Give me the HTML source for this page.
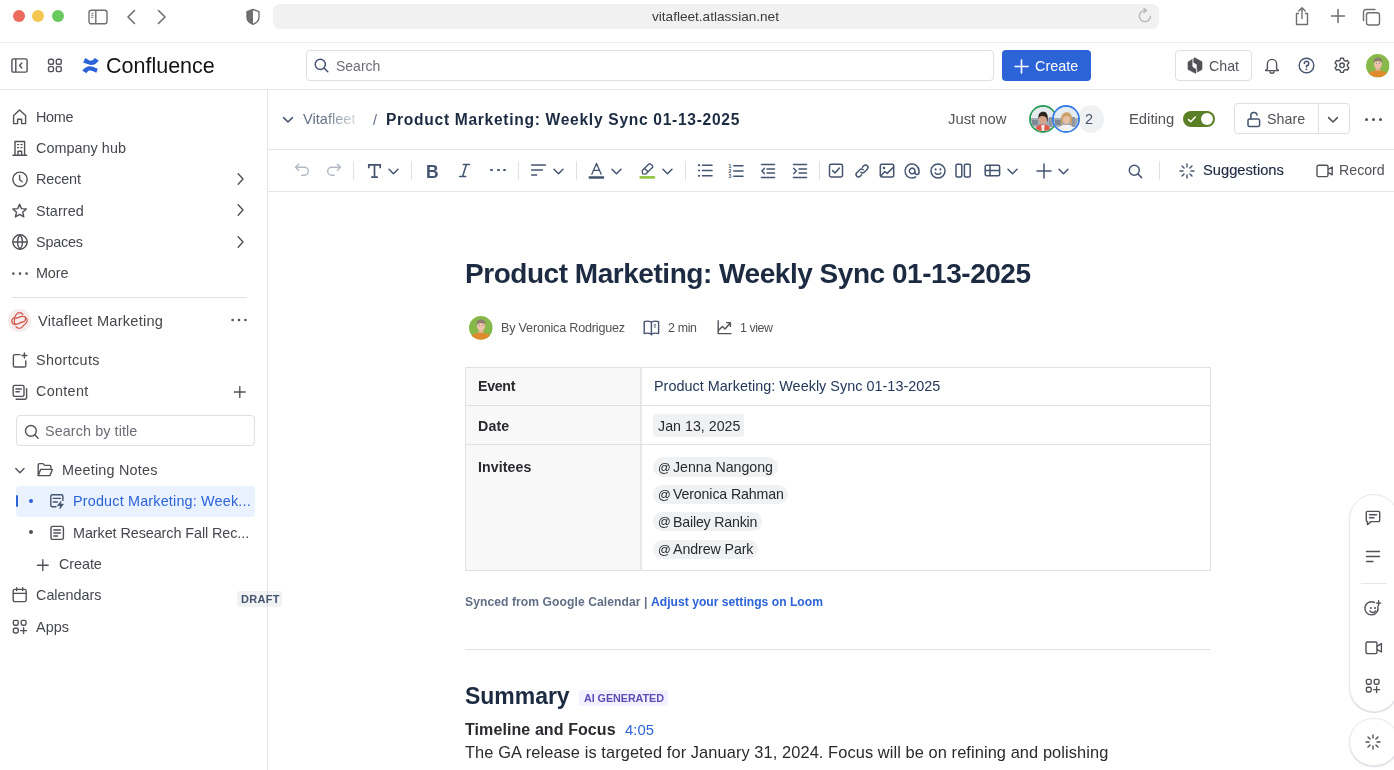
<!DOCTYPE html>
<html><head><meta charset="utf-8"><style>
html,body{margin:0;padding:0;width:1394px;height:770px;overflow:hidden;background:#fff;position:relative}
body{font-family:"Liberation Sans",sans-serif}
.t{position:absolute;white-space:nowrap;line-height:1;will-change:transform}
svg{overflow:visible}
</style></head><body>
<div style="position:absolute;left:0px;top:0px;width:1394px;height:42px;background:#fff"></div>
<div style="position:absolute;left:0px;top:42px;width:1394px;height:1px;background:#ececec"></div>
<div style="position:absolute;left:12.5px;top:9.5px;width:12px;height:12px;background:#ec6b5f;border-radius:50%"></div>
<div style="position:absolute;left:32px;top:9.5px;width:12px;height:12px;background:#f4c751;border-radius:50%"></div>
<div style="position:absolute;left:51.7px;top:9.5px;width:12px;height:12px;background:#68c95c;border-radius:50%"></div>
<svg style="position:absolute;left:88px;top:9px;" width="20" height="16" viewBox="0 0 20 16" fill="none"><rect x="1" y="1.2" width="18" height="13.6" rx="2.2" stroke="#6f6f6f" stroke-width="1.4"/><line x1="7.8" y1="1.5" x2="7.8" y2="14.5" stroke="#6f6f6f" stroke-width="1.4"/><path d="M3.2 4.3h2.4M3.2 6.3h2.4M3.2 8.3h2.4" stroke="#6f6f6f" stroke-width="0.9"/></svg>
<svg style="position:absolute;left:125px;top:9px;" width="12" height="16" viewBox="0 0 12 16" fill="none"><path d="M9.5 1.5 L3 8 L9.5 14.5" stroke="#6f6f6f" stroke-width="1.6" stroke-linecap="round" stroke-linejoin="round"/></svg>
<svg style="position:absolute;left:156px;top:9px;" width="12" height="16" viewBox="0 0 12 16" fill="none"><path d="M2.5 1.5 L9 8 L2.5 14.5" stroke="#6f6f6f" stroke-width="1.6" stroke-linecap="round" stroke-linejoin="round"/></svg>
<svg style="position:absolute;left:245px;top:8px;" width="16" height="18" viewBox="0 0 16 18" fill="none"><path d="M8 1.5 L14 3.6 V9.2 C14 12.6 11.2 15 8 16.3 C4.8 15 2 12.6 2 9.2 V3.6 Z" stroke="#6f6f6f" stroke-width="1.4" stroke-linejoin="round"/><path d="M8 1.5 L2 3.6 V9.2 C2 12.6 4.8 15 8 16.3 Z" fill="#6f6f6f"/></svg>
<div style="position:absolute;left:273px;top:4px;width:886px;height:25px;background:#f1f1f1;border-radius:7px"></div>
<div class="t" style="left:651.5px;top:10.00px;font-size:13.6px;color:#3b3b3b;font-weight:400;">vitafleet.atlassian.net</div>
<svg style="position:absolute;left:1136px;top:7px;" width="18" height="18" viewBox="0 0 18 18" fill="none"><path d="M14.5 9.5 A5.6 5.6 0 1 1 9 3.4" stroke="#b4b4b4" stroke-width="1.3" stroke-linecap="round"/><path d="M7.8 1.2 L10.6 3.4 L7.8 5.6" stroke="#b4b4b4" stroke-width="1.3" stroke-linecap="round" stroke-linejoin="round"/></svg>
<svg style="position:absolute;left:1294px;top:6px;" width="16" height="20" viewBox="0 0 16 20" fill="none"><path d="M5 7.5 H2.5 V18.5 H13.5 V7.5 H11" stroke="#6f6f6f" stroke-width="1.4" stroke-linejoin="round"/><path d="M8 12.5 V2 M4.8 5 L8 1.8 L11.2 5" stroke="#6f6f6f" stroke-width="1.4" stroke-linecap="round" stroke-linejoin="round"/></svg>
<svg style="position:absolute;left:1330px;top:8px;" width="16" height="16" viewBox="0 0 16 16" fill="none"><path d="M8 1.5 V14.5 M1.5 8 H14.5" stroke="#6f6f6f" stroke-width="1.5" stroke-linecap="round"/></svg>
<svg style="position:absolute;left:1362px;top:8px;" width="19" height="18" viewBox="0 0 19 18" fill="none"><rect x="4.5" y="4.7" width="13" height="12.3" rx="2.2" stroke="#6f6f6f" stroke-width="1.4"/><path d="M1.5 12.5 V4 A2.5 2.5 0 0 1 4 1.5 H13" stroke="#6f6f6f" stroke-width="1.4" stroke-linecap="round"/></svg>
<div style="position:absolute;left:0px;top:89px;width:1394px;height:1px;background:#e5e7eb"></div>
<svg style="position:absolute;left:11px;top:58px;" width="17" height="15" viewBox="0 0 17 15" fill="none"><rect x="0.9" y="0.9" width="15.2" height="13.2" rx="1.6" stroke="#505258" stroke-width="1.4"/><line x1="4.8" y1="1" x2="4.8" y2="14" stroke="#505258" stroke-width="1.4"/><path d="M10.8 5 L8.6 7.5 L10.8 10" stroke="#505258" stroke-width="1.4" stroke-linecap="round" stroke-linejoin="round"/></svg>
<svg style="position:absolute;left:47px;top:58px;" width="16" height="15" viewBox="0 0 16 15" fill="none"><rect x="1.5" y="1.2" width="5" height="5" rx="1.5" stroke="#505258" stroke-width="1.4"/><rect x="9.3" y="1.2" width="5" height="5" rx="1.5" stroke="#505258" stroke-width="1.4"/><rect x="1.5" y="8.6" width="5" height="5" rx="1.5" stroke="#505258" stroke-width="1.4"/><rect x="9.3" y="8.6" width="5" height="5" rx="1.5" stroke="#505258" stroke-width="1.4"/></svg>
<svg style="position:absolute;left:78px;top:52px;" width="28" height="26" viewBox="0 0 28 26" fill="none"><path d="M7.3 5.9 C9.5 7 11.5 9.2 13.5 8.6 C15 8.2 16 7 16.8 6 L20.8 8.4 C19 11 16.5 13 13 12.9 C10.5 12.8 8 11.5 5.1 10.5 Z" fill="#2c64d8"/><path d="M4.2 18.5 C6.5 16 9 14.2 11.8 14.2 C14.5 14.2 17 15.6 19.8 16.8 L18.3 20.8 C16 19.5 13.8 18.3 11.8 18.4 C10.3 18.5 9.2 19.8 8.3 21.2 Z" fill="#2c64d8"/></svg>
<div class="t" style="left:105.5px;top:56.00px;font-size:21.5px;color:#101214;font-weight:400;">Confluence</div>
<div style="position:absolute;left:306px;top:50px;width:688px;height:31px;border:1px solid #dcdfe4;border-radius:4px;box-sizing:border-box;background:#fff"></div>
<svg style="position:absolute;left:314px;top:58px;" width="15" height="15" viewBox="0 0 15 15" fill="none"><circle cx="6.3" cy="6.3" r="5.1" stroke="#44546f" stroke-width="1.5"/><path d="M10 10 L13.8 13.8" stroke="#44546f" stroke-width="1.5" stroke-linecap="round"/></svg>
<div class="t" style="left:335.5px;top:59.00px;font-size:14px;color:#6b6e76;font-weight:400;">Search</div>
<div style="position:absolute;left:1001.7px;top:50px;width:89px;height:30.7px;background:#2c64d8;border-radius:4px"></div>
<svg style="position:absolute;left:1013.5px;top:58.7px;" width="15" height="15" viewBox="0 0 15 15" fill="none"><path d="M7.5 1 V14 M1 7.5 H14" stroke="#fff" stroke-width="1.6" stroke-linecap="round"/></svg>
<div class="t" style="left:1035px;top:59.00px;font-size:14.4px;color:#fff;font-weight:400;">Create</div>
<div style="position:absolute;left:1175.2px;top:50px;width:76.4px;height:30.7px;border:1px solid #dddee1;border-radius:4px;box-sizing:border-box"></div>
<svg style="position:absolute;left:1183px;top:53px;" width="24" height="24" viewBox="0 0 24 24" fill="none"><path d="M11.8 4.8 L19 8.7 V16.4 L12.3 20.2 L5 16.4 V9 Z" fill="#505258" stroke="#505258" stroke-width="0.6" stroke-linejoin="round"/><path d="M9.9 5 V13.6 L13.7 16 V21" stroke="#fff" stroke-width="0.9"/><path d="M9.9 9.3 L13.7 11.5 V16 L9.9 13.6 Z" fill="#fff"/></svg>
<div class="t" style="left:1209px;top:59.00px;font-size:14.2px;color:#505258;font-weight:400;">Chat</div>
<svg style="position:absolute;left:1263.5px;top:57px;" width="16" height="17" viewBox="0 0 16 17" fill="none"><path d="M3.4 11.8 V7 A4.6 4.6 0 0 1 12.6 7 V11.8 L14.4 13.6 H1.6 Z" stroke="#505258" stroke-width="1.4" stroke-linejoin="round"/><path d="M6 14.2 A2 2 0 0 0 10 14.2" stroke="#505258" stroke-width="1.4"/></svg>
<svg style="position:absolute;left:1298px;top:57px;" width="17" height="17" viewBox="0 0 17 17" fill="none"><circle cx="8.5" cy="8.5" r="7.3" stroke="#44546f" stroke-width="1.4"/><path d="M6.3 6.5 A2.2 2.2 0 1 1 8.5 8.7 V10" stroke="#44546f" stroke-width="1.5" stroke-linecap="round"/><circle cx="8.5" cy="12.3" r="0.9" fill="#44546f"/></svg>
<svg style="position:absolute;left:1334px;top:57px;" width="16" height="17" viewBox="0 0 16 17" fill="none"><path d="M6.6 1.2 H9.4 L9.9 3.2 L11.5 4.1 L13.5 3.5 L14.9 5.9 L13.4 7.4 V9.2 L14.9 10.7 L13.5 13.1 L11.5 12.5 L9.9 13.4 L9.4 15.4 H6.6 L6.1 13.4 L4.5 12.5 L2.5 13.1 L1.1 10.7 L2.6 9.2 V7.4 L1.1 5.9 L2.5 3.5 L4.5 4.1 L6.1 3.2 Z" stroke="#505258" stroke-width="1.4" stroke-linejoin="round"/><circle cx="8" cy="8.3" r="2.3" stroke="#505258" stroke-width="1.4"/></svg>
<svg style="position:absolute;left:1365.7px;top:53.8px;" width="23.5" height="23.5" viewBox="0 0 24 24" fill="none"><defs><clipPath id="c1365"><circle cx="12" cy="12" r="12"/></clipPath></defs><g clip-path="url(#c1365)"><rect width="24" height="24" fill="#86b84a"/><rect x="9.8" y="12.5" width="4.6" height="6" fill="#e2b393"/><path d="M0.5 24 C1.5 19.5 5 17.6 9 17.2 L15.4 17.2 C19 17.6 22.5 19.5 23.5 24 Z" fill="#e08b2b"/><ellipse cx="12.2" cy="9.8" rx="4.2" ry="5.1" fill="#ecc3a6"/><path d="M7.9 9.6 C7.2 4.6 9.8 3.6 12.2 3.6 C15 3.6 17 5 16.5 9.6 C15.8 6.6 9.2 6.2 7.9 9.6 Z" fill="#8f7d70"/><circle cx="10.6" cy="9.6" r="0.65" fill="#8098ae"/><circle cx="13.9" cy="9.6" r="0.65" fill="#8098ae"/></g></svg>
<div style="position:absolute;left:267px;top:90px;width:1px;height:680px;background:#e4e6ea"></div>
<svg style="position:absolute;left:12px;top:108.5px;" width="16" height="16" viewBox="0 0 16 16" fill="none"><path d="M1.6 14.6 V6.6 L7.6 1 L13.6 6.6 V14.6 H9.6 V10.2 H5.6 V14.6 Z" stroke="#505258" stroke-width="1.4" stroke-linecap="round" stroke-linejoin="round"/></svg>
<div class="t" style="left:36.1px;top:110.00px;font-size:14.4px;color:#44474d;font-weight:400;letter-spacing:-0.303px;">Home</div>
<svg style="position:absolute;left:12px;top:139.5px;" width="16" height="16" viewBox="0 0 16 16" fill="none"><path d="M3 15.2 V1.5 H12.6 V15.2 M1 15.3 H14.6" stroke="#505258" stroke-width="1.4" stroke-linecap="round" stroke-linejoin="round"/><path d="M6 15.2 V11.2 H9.6 V15.2" stroke="#505258" stroke-width="1.4" stroke-linecap="round" stroke-linejoin="round"/><path d="M5.6 4.6h1M9 4.6h1M5.6 7.6h1M9 7.6h1" stroke="#505258" stroke-width="1.4" stroke-linecap="round" stroke-linejoin="round" stroke-width="1.5"/></svg>
<div class="t" style="left:36.1px;top:141.00px;font-size:14.4px;color:#44474d;font-weight:400;letter-spacing:0.035px;">Company hub</div>
<svg style="position:absolute;left:11.5px;top:171px;" width="16" height="16" viewBox="0 0 16 16" fill="none"><circle cx="8" cy="8.3" r="7.2" stroke="#505258" stroke-width="1.4" stroke-linecap="round" stroke-linejoin="round"/><path d="M7.6 4.4 V8.8 L10.2 10.8" stroke="#505258" stroke-width="1.4" stroke-linecap="round" stroke-linejoin="round"/></svg>
<div class="t" style="left:36.2px;top:172.00px;font-size:14.4px;color:#44474d;font-weight:400;letter-spacing:-0.125px;">Recent</div>
<svg style="position:absolute;left:12px;top:202.5px;" width="16" height="16" viewBox="0 0 16 16" fill="none"><path d="M7.6 1.2 L9.5 5.6 L14.3 6 L10.7 9.2 L11.8 13.9 L7.6 11.4 L3.4 13.9 L4.5 9.2 L0.9 6 L5.7 5.6 Z" stroke="#505258" stroke-width="1.4" stroke-linecap="round" stroke-linejoin="round"/></svg>
<div class="t" style="left:36.2px;top:204.00px;font-size:14.4px;color:#44474d;font-weight:400;letter-spacing:0.114px;">Starred</div>
<svg style="position:absolute;left:11.5px;top:234px;" width="16" height="16" viewBox="0 0 16 16" fill="none"><circle cx="8" cy="8" r="7.2" stroke="#505258" stroke-width="1.4" stroke-linecap="round" stroke-linejoin="round"/><path d="M0.9 8 H15.1" stroke="#505258" stroke-width="1.4" stroke-linecap="round" stroke-linejoin="round"/><path d="M8 0.8 C4.6 4.8 4.6 11.2 8 15.2 C11.4 11.2 11.4 4.8 8 0.8" stroke="#505258" stroke-width="1.4" stroke-linecap="round" stroke-linejoin="round"/></svg>
<div class="t" style="left:36.2px;top:235.00px;font-size:14.4px;color:#44474d;font-weight:400;letter-spacing:-0.206px;">Spaces</div>
<svg style="position:absolute;left:11.5px;top:266px;" width="16" height="16" viewBox="0 0 16 16" fill="none"><circle cx="1.4" cy="7.6" r="1.3" fill="#505258"/><circle cx="8" cy="7.6" r="1.3" fill="#505258"/><circle cx="14.6" cy="7.6" r="1.3" fill="#505258"/></svg>
<div class="t" style="left:36.2px;top:266.00px;font-size:14.4px;color:#44474d;font-weight:400;letter-spacing:-0.135px;">More</div>
<svg style="position:absolute;left:234px;top:171px;" width="16" height="16" viewBox="0 0 16 16" fill="none"><path d="M4.2 2.8 L9 8 L4.2 13.2" stroke="#505258" stroke-width="1.4" stroke-linecap="round" stroke-linejoin="round"/></svg>
<svg style="position:absolute;left:234px;top:202.3px;" width="16" height="16" viewBox="0 0 16 16" fill="none"><path d="M4.2 2.8 L9 8 L4.2 13.2" stroke="#505258" stroke-width="1.4" stroke-linecap="round" stroke-linejoin="round"/></svg>
<svg style="position:absolute;left:234px;top:233.6px;" width="16" height="16" viewBox="0 0 16 16" fill="none"><path d="M4.2 2.8 L9 8 L4.2 13.2" stroke="#505258" stroke-width="1.4" stroke-linecap="round" stroke-linejoin="round"/></svg>
<div style="position:absolute;left:11.5px;top:296.5px;width:235.5px;height:1px;background:#dfe1e6"></div>
<div style="position:absolute;left:8.2px;top:309.4px;width:22.4px;height:22.4px;background:#f5eceb;border-radius:50%"></div>
<svg style="position:absolute;left:4px;top:304px;" width="32" height="32" viewBox="0 0 32 32" fill="none"><path d="M10.8 14.1 C12 14.1 13.2 14 14.5 13.6 C15.6 13.2 16.4 12.5 17.6 12.4 C18.8 12.3 20 12.3 20.8 12.6 C21.6 13.2 21.8 14.2 21.5 15.3 C21.3 16.3 21 17.3 20 17.6 C19 17.9 18.2 18 17.3 18.4 C16.3 18.9 15.4 19.4 14.3 19.7 C13.3 20 12.2 20.3 11.3 20.2 C10.5 19.5 10.3 18.4 10.3 17.3 C10.3 16.2 10.4 15 10.8 14.1 Z" stroke="#d4534b" stroke-width="1.2"/><path d="M18.8 10.4 C17.8 9 16.6 8.5 15.4 8.6 C13.8 8.7 12.6 9.8 12 10.8 C11.5 11.8 11.2 12.8 10.4 13.6 C9.4 14.2 8.2 14.8 7.9 16.2 C7.6 17.8 8.2 19.3 9.5 20 C10.4 20.5 11.2 20.6 12 20.7" stroke="#d4534b" stroke-width="1.2" stroke-linecap="round"/><path d="M21.4 13.6 C22.6 14.4 23.4 15.6 23.2 17 C23 18.6 21.8 19.6 20.6 20.4 C19.6 21 19.2 22 18.4 22.9 C17.4 23.9 15.8 24.4 14.4 24.2 C13.4 24 12.6 23.6 12 22.9" stroke="#d4534b" stroke-width="1.2" stroke-linecap="round"/></svg>
<div class="t" style="left:38px;top:314.00px;font-size:14.6px;color:#44474d;font-weight:400;letter-spacing:0.242px;">Vitafleet Marketing</div>
<svg style="position:absolute;left:231px;top:312px;" width="16" height="16" viewBox="0 0 16 16" fill="none"><circle cx="1.6" cy="8" r="1.3" fill="#505258"/><circle cx="8" cy="8" r="1.3" fill="#505258"/><circle cx="14.4" cy="8" r="1.3" fill="#505258"/></svg>
<svg style="position:absolute;left:12px;top:351.5px;" width="16" height="16" viewBox="0 0 16 16" fill="none"><path d="M8 2.6 H3 A1.6 1.6 0 0 0 1.4 4.2 V13.4 A1.6 1.6 0 0 0 3 15 H12.2 A1.6 1.6 0 0 0 13.8 13.4 V9" stroke="#505258" stroke-width="1.4" stroke-linecap="round" stroke-linejoin="round"/><path d="M12.4 1 V6 M9.9 3.5 H14.9" stroke="#505258" stroke-width="1.4" stroke-linecap="round" stroke-linejoin="round"/></svg>
<div class="t" style="left:35.8px;top:353.00px;font-size:14.4px;color:#44474d;font-weight:400;letter-spacing:0.334px;">Shortcuts</div>
<svg style="position:absolute;left:12px;top:383.5px;" width="16" height="16" viewBox="0 0 16 16" fill="none"><rect x="1.2" y="1.4" width="10.8" height="11" rx="1.6" stroke="#505258" stroke-width="1.4" stroke-linecap="round" stroke-linejoin="round"/><path d="M3.9 5 H9.3 M3.9 7.8 H7.4" stroke="#505258" stroke-width="1.4" stroke-linecap="round" stroke-linejoin="round"/><path d="M14.6 4.6 V13.6 A1.6 1.6 0 0 1 13 15.2 H4.2" stroke="#505258" stroke-width="1.4" stroke-linecap="round" stroke-linejoin="round"/></svg>
<div class="t" style="left:35.8px;top:384.00px;font-size:14.4px;color:#44474d;font-weight:400;letter-spacing:0.295px;">Content</div>
<svg style="position:absolute;left:231.5px;top:383.5px;" width="16" height="16" viewBox="0 0 16 16" fill="none"><path d="M7.8 2.6 V13.4 M2.4 8 H13.2" stroke="#505258" stroke-width="1.4" stroke-linecap="round" stroke-linejoin="round"/></svg>
<div style="position:absolute;left:16px;top:415px;width:239px;height:31px;border:1px solid #dcdfe4;border-radius:4px;box-sizing:border-box"></div>
<svg style="position:absolute;left:23.5px;top:423.5px;" width="16" height="16" viewBox="0 0 16 16" fill="none"><circle cx="6.9" cy="6.9" r="5.4" stroke="#505258" stroke-width="1.4" stroke-linecap="round" stroke-linejoin="round" stroke-width="1.5"/><path d="M10.8 10.8 L14.2 14.2" stroke="#505258" stroke-width="1.4" stroke-linecap="round" stroke-linejoin="round" stroke-width="1.5"/></svg>
<div class="t" style="left:45.3px;top:424.00px;font-size:14.4px;color:#6b6e76;font-weight:400;letter-spacing:0.076px;">Search by title</div>
<svg style="position:absolute;left:11.5px;top:462.5px;" width="16" height="16" viewBox="0 0 16 16" fill="none"><path d="M3.8 5.6 L7.9 9.7 L12 5.6" stroke="#505258" stroke-width="1.4" stroke-linecap="round" stroke-linejoin="round"/></svg>
<svg style="position:absolute;left:37px;top:461.5px;" width="17" height="16" viewBox="0 0 17 16" fill="none"><path d="M1.2 13.6 V3 A1.4 1.4 0 0 1 2.6 1.6 H6 L7.6 3.4 H12.6 A1.3 1.3 0 0 1 13.9 4.7 V6.2" stroke="#505258" stroke-width="1.4" stroke-linecap="round" stroke-linejoin="round"/><path d="M1.3 13.6 L3.6 7.4 H15.3 L13 13.6 Z" stroke="#505258" stroke-width="1.4" stroke-linecap="round" stroke-linejoin="round"/></svg>
<div class="t" style="left:61.5px;top:463.00px;font-size:14.4px;color:#44474d;font-weight:400;letter-spacing:0.222px;">Meeting Notes</div>
<div style="position:absolute;left:16px;top:485.5px;width:239px;height:31px;background:#e9f2fe;border-radius:4px"></div>
<div style="position:absolute;left:16px;top:495px;width:2.2px;height:11.8px;background:#2c64d8;border-radius:1px"></div>
<div style="position:absolute;left:29.3px;top:499.2px;width:3.8px;height:3.8px;background:#2c64d8;border-radius:50%"></div>
<svg style="position:absolute;left:46px;top:490px;" width="22" height="22" viewBox="0 0 22 22" fill="none"><path d="M10 16.7 H6.3 A1.5 1.5 0 0 1 4.8 15.2 V6.3 A1.5 1.5 0 0 1 6.3 4.8 H15.4 A1.5 1.5 0 0 1 16.9 6.3 V10.4" stroke="#44546f" stroke-width="1.4" stroke-linecap="round" stroke-linejoin="round"/><path d="M7.3 8.4 H14.4 M7.3 12 H11.3" stroke="#44546f" stroke-width="1.4" stroke-linecap="round"/><path d="M15.1 10.9 L11.2 15.7 H14.2 L13.9 19.1 L17.6 14.1 H14.7 Z" fill="#44546f" stroke="#44546f" stroke-width="0.5" stroke-linejoin="round"/></svg>
<div class="t" style="left:72.8px;top:494.00px;font-size:14.4px;color:#2c64d8;font-weight:400;letter-spacing:0.176px;">Product Marketing: Week...</div>
<div style="position:absolute;left:29.3px;top:530.4px;width:3.8px;height:3.8px;background:#505258;border-radius:50%"></div>
<svg style="position:absolute;left:50px;top:524.8px;" width="16" height="16" viewBox="0 0 16 16" fill="none"><rect x="1" y="1.4" width="12.4" height="13" rx="1.6" stroke="#505258" stroke-width="1.4" stroke-linecap="round" stroke-linejoin="round"/><path d="M3.8 5 H10.4 M3.8 8 H10.4 M3.8 11 H7.6" stroke="#505258" stroke-width="1.4" stroke-linecap="round" stroke-linejoin="round"/></svg>
<div class="t" style="left:73.2px;top:526.00px;font-size:14.4px;color:#44474d;font-weight:400;letter-spacing:-0.082px;">Market Research Fall Rec...</div>
<svg style="position:absolute;left:35px;top:556.5px;" width="16" height="16" viewBox="0 0 16 16" fill="none"><path d="M7.8 2.8 V13.6 M2.4 8.2 H13.2" stroke="#505258" stroke-width="1.4" stroke-linecap="round" stroke-linejoin="round"/></svg>
<div class="t" style="left:59.4px;top:557.00px;font-size:14.4px;color:#44474d;font-weight:400;letter-spacing:-0.064px;">Create</div>
<svg style="position:absolute;left:12px;top:587px;" width="16" height="16" viewBox="0 0 16 16" fill="none"><rect x="1.2" y="2.4" width="13" height="12.2" rx="1.6" stroke="#505258" stroke-width="1.4" stroke-linecap="round" stroke-linejoin="round"/><path d="M1.4 6.4 H14 M4.7 0.8 V3.6 M10.7 0.8 V3.6" stroke="#505258" stroke-width="1.4" stroke-linecap="round" stroke-linejoin="round"/></svg>
<div class="t" style="left:35.8px;top:588.00px;font-size:14.4px;color:#44474d;font-weight:400;letter-spacing:-0.017px;">Calendars</div>
<div style="position:absolute;left:237px;top:591.3px;width:44.8px;height:15.6px;background:rgba(9,30,66,0.06);border-radius:3px"></div>
<div class="t" style="left:241.3px;top:594.00px;font-size:11px;color:#44546f;font-weight:700;letter-spacing:0.3px">DRAFT</div>
<svg style="position:absolute;left:12px;top:618.5px;" width="16" height="16" viewBox="0 0 16 16" fill="none"><rect x="1.4" y="1.4" width="4.8" height="4.8" rx="1.4" stroke="#505258" stroke-width="1.4" stroke-linecap="round" stroke-linejoin="round"/><rect x="9.2" y="1.4" width="4.8" height="4.8" rx="1.4" stroke="#505258" stroke-width="1.4" stroke-linecap="round" stroke-linejoin="round"/><rect x="1.4" y="9.2" width="4.8" height="4.8" rx="1.4" stroke="#505258" stroke-width="1.4" stroke-linecap="round" stroke-linejoin="round"/><path d="M11.6 8.6 V14.6 M8.6 11.6 H14.6" stroke="#505258" stroke-width="1.4" stroke-linecap="round" stroke-linejoin="round"/></svg>
<div class="t" style="left:35.8px;top:620.00px;font-size:14.4px;color:#44474d;font-weight:400;letter-spacing:0.060px;">Apps</div>
<div style="position:absolute;left:268px;top:149px;width:1126px;height:1px;background:#e4e6ea"></div>
<div style="position:absolute;left:268px;top:191px;width:1126px;height:1px;background:#e4e6ea"></div>
<svg style="position:absolute;left:282px;top:114px;" width="12" height="12" viewBox="0 0 12 12" fill="none"><path d="M1.6 3.6 L6 8 L10.4 3.6" stroke="#44546f" stroke-width="1.5" stroke-linecap="round" stroke-linejoin="round"/></svg>
<div class="t" style="left:303px;top:112.00px;font-size:14.6px;color:#626f86;font-weight:400;-webkit-mask-image:linear-gradient(90deg,#000 40%,rgba(0,0,0,0.25) 100%);mask-image:linear-gradient(90deg,#000 40%,rgba(0,0,0,0.25) 100%)">Vitafleet</div>
<div class="t" style="left:372.5px;top:113.00px;font-size:14.5px;color:#626f86;font-weight:400;">/</div>
<div class="t" style="left:386px;top:112.00px;font-size:15.6px;color:#1c2b42;font-weight:700;letter-spacing:0.695px;">Product Marketing: Weekly Sync 01-13-2025</div>
<div class="t" style="left:948px;top:112.00px;font-size:14.8px;color:#505258;font-weight:400;">Just now</div>
<svg style="position:absolute;left:1028.5px;top:104.6px;" width="28" height="28" viewBox="0 0 28 28" fill="none"><defs><clipPath id="av1"><circle cx="14" cy="14" r="12"/></clipPath></defs><circle cx="14" cy="14" r="13" fill="#fff" stroke="#2e9d5c" stroke-width="1.9"/><g clip-path="url(#av1)"><rect width="28" height="28" fill="#e6ebf0"/><rect y="13" width="28" height="9" fill="#a3acb5"/><rect x="3" y="15" width="6" height="5" fill="#7d8893"/><rect x="20" y="12" width="3" height="10" fill="#8e99a4"/><path d="M13 28 L5 28 C6 22 9 20 12 19.5 L16 19.5 C19 20 21.5 22 22.5 28 Z" fill="#e2574b"/><path d="M12.3 20 L15.7 20 L15 28 L13 28 Z" fill="#efe9e6"/><ellipse cx="13.8" cy="14.3" rx="3.9" ry="4.9" fill="#d6a48a"/><path d="M9.6 14 C8.5 8 12 6.2 15 6.8 C18.5 7.4 19.5 11 18.4 17.5 L17.5 13 C16.5 11 12 10 10.2 12.5 Z" fill="#2f2622"/></g></svg>
<div style="position:absolute;left:1077.8px;top:105px;width:26px;height:27.5px;background:#f0f1f3;border-radius:50%"></div>
<svg style="position:absolute;left:1052.4px;top:104.6px;" width="28" height="28" viewBox="0 0 28 28" fill="none"><defs><clipPath id="av2"><circle cx="14" cy="14" r="12"/></clipPath></defs><circle cx="14" cy="14" r="13" fill="#fff" stroke="#357de8" stroke-width="1.9"/><g clip-path="url(#av2)"><rect width="28" height="28" fill="#e6ebf0"/><rect y="13" width="28" height="9" fill="#a3acb5"/><rect x="3" y="15" width="6" height="5" fill="#7d8893"/><rect x="20" y="12" width="3" height="10" fill="#8e99a4"/><path d="M5 28 C6 22 9 20.5 12 20 L17 20 C20 20.5 22 22 23 28 Z" fill="#f3f3f3"/><path d="M9.5 21 C8 15 8.5 7.5 14.5 7.2 C20 7 21 13 19.8 21 C18 19 17.5 16 17.5 14 L11.5 14 C11.5 16 11 19 9.5 21 Z" fill="#c9a26e"/><ellipse cx="14.5" cy="14.3" rx="3.5" ry="4.6" fill="#e8c0a2"/><path d="M11 12.5 C11 9.5 13 8.8 14.8 8.8 C17 8.8 18 10 18 12.5 C16.5 10.5 13 10.5 11 12.5 Z" fill="#c9a26e"/></g></svg>
<div class="t" style="left:1085px;top:112.00px;font-size:14.5px;color:#44546f;font-weight:400;">2</div>
<div class="t" style="left:1129.3px;top:112.00px;font-size:14.8px;color:#505258;font-weight:400;">Editing</div>
<div style="position:absolute;left:1183px;top:111.2px;width:31.5px;height:16px;background:#5b7f24;border-radius:8px"></div>
<div style="position:absolute;left:1201px;top:113.2px;width:12px;height:12px;background:#fff;border-radius:50%"></div>
<svg style="position:absolute;left:1186.5px;top:114.5px;" width="10" height="9" viewBox="0 0 10 9" fill="none"><path d="M1.5 4.6 L3.8 6.8 L8.3 2" stroke="#fff" stroke-width="1.5" stroke-linecap="round" stroke-linejoin="round"/></svg>
<div style="position:absolute;left:1234.4px;top:103.4px;width:115.2px;height:31px;border:1px solid #dcdfe4;border-radius:4px;box-sizing:border-box"></div>
<div style="position:absolute;left:1317.5px;top:104px;width:1px;height:30px;background:#dcdfe4"></div>
<svg style="position:absolute;left:1246px;top:110.5px;" width="16" height="17" viewBox="0 0 16 17" fill="none"><rect x="2" y="8" width="11.6" height="7.6" rx="1.6" stroke="#44546f" stroke-width="1.5" stroke-linecap="round" stroke-linejoin="round"/><path d="M4.8 8 V5 A3.2 3.2 0 0 1 11.1 4" stroke="#44546f" stroke-width="1.5" stroke-linecap="round" stroke-linejoin="round"/></svg>
<div class="t" style="left:1267.3px;top:112.00px;font-size:14.3px;color:#505258;font-weight:400;">Share</div>
<svg style="position:absolute;left:1327px;top:113.5px;" width="12" height="12" viewBox="0 0 12 12" fill="none"><path d="M1.6 3.6 L6 8 L10.4 3.6" stroke="#505258" stroke-width="1.5" stroke-linecap="round" stroke-linejoin="round"/></svg>
<div style="position:absolute;left:1364.7px;top:117.8px;width:3px;height:3px;background:#505258;border-radius:50%"></div>
<div style="position:absolute;left:1371.7px;top:117.8px;width:3px;height:3px;background:#505258;border-radius:50%"></div>
<div style="position:absolute;left:1378.7px;top:117.8px;width:3px;height:3px;background:#505258;border-radius:50%"></div>
<svg style="position:absolute;left:294px;top:163px;" width="16" height="15" viewBox="0 0 16 15" fill="none"><path d="M4.6 1.4 L1.6 4.3 L4.6 7.2" stroke="#b3b9c4" stroke-width="1.5" stroke-linecap="round" stroke-linejoin="round"/><path d="M1.8 4.3 H10.4 A3.9 3.9 0 0 1 10.4 12.2 H7.8" stroke="#b3b9c4" stroke-width="1.5" stroke-linecap="round" stroke-linejoin="round"/></svg>
<svg style="position:absolute;left:325.5px;top:163px;" width="16" height="15" viewBox="0 0 16 15" fill="none"><path d="M11.4 1.4 L14.4 4.3 L11.4 7.2" stroke="#b3b9c4" stroke-width="1.5" stroke-linecap="round" stroke-linejoin="round"/><path d="M14.2 4.3 H5.6 A3.9 3.9 0 0 0 5.6 12.2 H8.2" stroke="#b3b9c4" stroke-width="1.5" stroke-linecap="round" stroke-linejoin="round"/></svg>
<div style="position:absolute;left:353.3px;top:161px;width:1px;height:18.6px;background:#dfe1e6"></div>
<svg style="position:absolute;left:366.5px;top:162.5px;" width="15" height="16" viewBox="0 0 15 16" fill="none"><path d="M1.8 4.5 V1.8 H13.2 V4.5 M7.5 1.8 V14.2 M5 14.2 H10" stroke="#44546f" stroke-width="1.7" stroke-linecap="square"/></svg>
<svg style="position:absolute;left:388px;top:168.2px;" width="11" height="7" viewBox="0 0 11 7" fill="none"><path d="M1 1.2 L5.5 5.7 L10 1.2" stroke="#44546f" stroke-width="1.5" stroke-linecap="round" stroke-linejoin="round"/></svg>
<div style="position:absolute;left:411.3px;top:161px;width:1px;height:18.6px;background:#dfe1e6"></div>
<div class="t" style="left:425.8px;top:164.00px;font-size:17.5px;color:#44546f;font-weight:700;">B</div>
<svg style="position:absolute;left:458px;top:163px;" width="13" height="15" viewBox="0 0 13 15" fill="none"><path d="M5.3 1.6 H11.4 M1.6 13.6 H7.7 M8.4 1.6 L4.6 13.6" stroke="#44546f" stroke-width="1.5" stroke-linecap="round"/></svg>
<div style="position:absolute;left:490.40000000000003px;top:168.6px;width:2.8px;height:2.8px;background:#44546f;border-radius:50%"></div>
<div style="position:absolute;left:496.90000000000003px;top:168.6px;width:2.8px;height:2.8px;background:#44546f;border-radius:50%"></div>
<div style="position:absolute;left:503.40000000000003px;top:168.6px;width:2.8px;height:2.8px;background:#44546f;border-radius:50%"></div>
<div style="position:absolute;left:518.3px;top:161px;width:1px;height:18.6px;background:#dfe1e6"></div>
<svg style="position:absolute;left:530px;top:163px;" width="17" height="15" viewBox="0 0 17 15" fill="none"><path d="M1.6 2 H15.4 M1.6 7 H12.4 M1.6 12 H6.6" stroke="#44546f" stroke-width="1.5" stroke-linecap="round" stroke-linejoin="round"/></svg>
<svg style="position:absolute;left:552.5px;top:168.2px;" width="11" height="7" viewBox="0 0 11 7" fill="none"><path d="M1 1.2 L5.5 5.7 L10 1.2" stroke="#44546f" stroke-width="1.5" stroke-linecap="round" stroke-linejoin="round"/></svg>
<div style="position:absolute;left:576.3px;top:161px;width:1px;height:18.6px;background:#dfe1e6"></div>
<svg style="position:absolute;left:588px;top:161.5px;" width="17" height="18" viewBox="0 0 17 18" fill="none"><path d="M3.8 12.2 L8.5 1.4 L13.2 12.2 M5.4 8.4 H11.6" stroke="#44546f" stroke-width="1.3" stroke-linecap="round" stroke-linejoin="round"/><rect x="0.6" y="14.3" width="15.6" height="2.4" rx="0.6" fill="#44546f"/></svg>
<svg style="position:absolute;left:610.5px;top:168.2px;" width="11" height="7" viewBox="0 0 11 7" fill="none"><path d="M1 1.2 L5.5 5.7 L10 1.2" stroke="#44546f" stroke-width="1.5" stroke-linecap="round" stroke-linejoin="round"/></svg>
<svg style="position:absolute;left:639px;top:161.5px;" width="17" height="18" viewBox="0 0 17 18" fill="none"><path d="M3.5 11.8 L3.3 8.6 L9.9 2 A1.2 1.2 0 0 1 11.6 2 L13.4 3.8 A1.2 1.2 0 0 1 13.4 5.5 L6.8 12.1 Z M5.5 6.4 L9.6 10.3" stroke="#44546f" stroke-width="1.35" stroke-linejoin="round"/><rect x="0.5" y="14" width="15.6" height="2.7" rx="0.6" fill="#94c748"/></svg>
<svg style="position:absolute;left:661.5px;top:168.2px;" width="11" height="7" viewBox="0 0 11 7" fill="none"><path d="M1 1.2 L5.5 5.7 L10 1.2" stroke="#44546f" stroke-width="1.5" stroke-linecap="round" stroke-linejoin="round"/></svg>
<div style="position:absolute;left:684.8px;top:161px;width:1px;height:18.6px;background:#dfe1e6"></div>
<svg style="position:absolute;left:697px;top:163px;" width="16" height="15" viewBox="0 0 16 15" fill="none"><circle cx="2" cy="2.2" r="1.1" fill="#44546f"/><circle cx="2" cy="7.5" r="1.1" fill="#44546f"/><circle cx="2" cy="12.8" r="1.1" fill="#44546f"/><path d="M5.4 2.2 H15 M5.4 7.5 H15 M5.4 12.8 H15" stroke="#44546f" stroke-width="1.5" stroke-linecap="round" stroke-linejoin="round"/></svg>
<svg style="position:absolute;left:728px;top:163px;" width="16" height="16" viewBox="0 0 16 16" fill="none"><text x="0.6" y="5" font-size="5.2" font-family="Liberation Sans" font-weight="700" fill="#44546f">1</text><text x="0.6" y="10.2" font-size="5.2" font-family="Liberation Sans" font-weight="700" fill="#44546f">2</text><text x="0.6" y="15.4" font-size="5.2" font-family="Liberation Sans" font-weight="700" fill="#44546f">3</text><path d="M5.8 2.8 H15 M5.8 8 H15 M5.8 13.2 H15" stroke="#44546f" stroke-width="1.5" stroke-linecap="round" stroke-linejoin="round"/></svg>
<svg style="position:absolute;left:760px;top:162.5px;" width="16" height="16" viewBox="0 0 16 16" fill="none"><path d="M1.5 1.6 H14.5 M7 5.9 H14.5 M7 10.1 H14.5 M1.5 14.4 H14.5 M4.3 5.4 L1.9 8 L4.3 10.6" stroke="#44546f" stroke-width="1.5" stroke-linecap="round" stroke-linejoin="round"/></svg>
<svg style="position:absolute;left:791.8px;top:162.5px;" width="16" height="16" viewBox="0 0 16 16" fill="none"><path d="M1.5 1.6 H14.5 M7 5.9 H14.5 M7 10.1 H14.5 M1.5 14.4 H14.5 M1.9 5.4 L4.3 8 L1.9 10.6" stroke="#44546f" stroke-width="1.5" stroke-linecap="round" stroke-linejoin="round"/></svg>
<div style="position:absolute;left:819.3px;top:161px;width:1px;height:18.6px;background:#dfe1e6"></div>
<svg style="position:absolute;left:828px;top:163px;" width="16" height="15" viewBox="0 0 16 15" fill="none"><rect x="1.5" y="1.3" width="13" height="12.6" rx="1.6" stroke="#44546f" stroke-width="1.5" stroke-linecap="round" stroke-linejoin="round"/><path d="M4.6 7.6 L7 10 L11.4 5" stroke="#44546f" stroke-width="1.5" stroke-linecap="round" stroke-linejoin="round"/></svg>
<svg style="position:absolute;left:853.5px;top:162.5px;" width="16" height="16" viewBox="0 0 16 16" fill="none"><path d="M6.8 9.2 A2.4 2.4 0 0 0 10.2 9.2 L13.2 6.2 A2.4 2.4 0 0 0 9.8 2.8 L8.4 4.2 M9.2 6.8 A2.4 2.4 0 0 0 5.8 6.8 L2.8 9.8 A2.4 2.4 0 0 0 6.2 13.2 L7.6 11.8" stroke="#44546f" stroke-width="1.5" stroke-linecap="round" stroke-linejoin="round"/></svg>
<svg style="position:absolute;left:879px;top:163px;" width="16" height="15" viewBox="0 0 16 15" fill="none"><rect x="1.3" y="1.3" width="13.4" height="12.6" rx="1.4" stroke="#44546f" stroke-width="1.5" stroke-linecap="round" stroke-linejoin="round"/><circle cx="5" cy="5" r="1.3" fill="#44546f"/><path d="M1.8 13 L5.8 8.6 L8.2 10.4 L14.6 4" stroke="#44546f" stroke-width="1.5" stroke-linecap="round" stroke-linejoin="round"/></svg>
<svg style="position:absolute;left:903.8px;top:162.5px;" width="17" height="16" viewBox="0 0 17 16" fill="none"><path d="M11 8 A2.8 2.8 0 1 1 11 7.9 V9.4 A2 2 0 0 0 15 9.4 V8 A7 7 0 1 0 11.6 14" stroke="#44546f" stroke-width="1.5" stroke-linecap="round" stroke-linejoin="round"/></svg>
<svg style="position:absolute;left:929.5px;top:162.5px;" width="17" height="16" viewBox="0 0 17 16" fill="none"><circle cx="8" cy="8" r="7" stroke="#44546f" stroke-width="1.5" stroke-linecap="round" stroke-linejoin="round"/><circle cx="5.6" cy="6.4" r="1.05" fill="#44546f"/><circle cx="10.4" cy="6.4" r="1.05" fill="#44546f"/><path d="M5.2 9.8 A3.3 3.3 0 0 0 10.8 9.8" stroke="#44546f" stroke-width="1.5" stroke-linecap="round" stroke-linejoin="round"/></svg>
<svg style="position:absolute;left:954.8px;top:163px;" width="17" height="15" viewBox="0 0 17 15" fill="none"><rect x="1" y="1.3" width="5.8" height="12.6" rx="1.2" stroke="#44546f" stroke-width="1.5" stroke-linecap="round" stroke-linejoin="round"/><rect x="9.4" y="1.3" width="5.8" height="12.6" rx="1.2" stroke="#44546f" stroke-width="1.5" stroke-linecap="round" stroke-linejoin="round"/></svg>
<svg style="position:absolute;left:984.3px;top:164px;" width="17" height="13" viewBox="0 0 17 13" fill="none"><rect x="1.2" y="1.2" width="14.4" height="10.6" rx="1.5" stroke="#44546f" stroke-width="1.5" stroke-linecap="round" stroke-linejoin="round"/><path d="M1.5 6.4 H15.4 M6 1.4 V11.6" stroke="#44546f" stroke-width="1.5" stroke-linecap="round" stroke-linejoin="round"/></svg>
<svg style="position:absolute;left:1007.2px;top:168.2px;" width="11" height="7" viewBox="0 0 11 7" fill="none"><path d="M1 1.2 L5.5 5.7 L10 1.2" stroke="#44546f" stroke-width="1.5" stroke-linecap="round" stroke-linejoin="round"/></svg>
<svg style="position:absolute;left:1036px;top:162.5px;" width="16" height="16" viewBox="0 0 16 16" fill="none"><path d="M8 1 V15 M1 8 H15" stroke="#44546f" stroke-width="1.5" stroke-linecap="round" stroke-linejoin="round"/></svg>
<svg style="position:absolute;left:1058.2px;top:168.2px;" width="11" height="7" viewBox="0 0 11 7" fill="none"><path d="M1 1.2 L5.5 5.7 L10 1.2" stroke="#44546f" stroke-width="1.5" stroke-linecap="round" stroke-linejoin="round"/></svg>
<svg style="position:absolute;left:1127.5px;top:163.5px;" width="15" height="15" viewBox="0 0 15 15" fill="none"><circle cx="6.3" cy="6.3" r="5" stroke="#44546f" stroke-width="1.5" stroke-linecap="round" stroke-linejoin="round"/><path d="M10 10 L13.6 13.6" stroke="#44546f" stroke-width="1.5" stroke-linecap="round" stroke-linejoin="round"/></svg>
<div style="position:absolute;left:1158.8px;top:161px;width:1px;height:18.6px;background:#dfe1e6"></div>
<svg style="position:absolute;left:1179px;top:162.5px;" width="16" height="16" viewBox="0 0 16 16" fill="none"><path d="M8 1 V4 M8 12 V15 M1 8 H4 M12 8 H15 M3 3 L5.1 5.1 M10.9 10.9 L13 13 M13 3 L10.9 5.1 M5.1 10.9 L3 13" stroke="#44546f" stroke-width="1.4" stroke-linecap="round"/></svg>
<div class="t" style="left:1203px;top:163.00px;font-size:14.7px;color:#1c2b42;font-weight:400;-webkit-text-stroke:0.15px #1c2b42">Suggestions</div>
<svg style="position:absolute;left:1315.5px;top:163.5px;" width="18" height="14" viewBox="0 0 18 14" fill="none"><rect x="1" y="1.2" width="11" height="11.4" rx="1.6" stroke="#505258" stroke-width="1.4"/><path d="M12 5.5 L16.2 3 V10.8 L12 8.3" stroke="#505258" stroke-width="1.4" stroke-linejoin="round"/></svg>
<div class="t" style="left:1338.6px;top:163.00px;font-size:14.2px;color:#505258;font-weight:400;">Record</div>
<div class="t" style="left:464.6px;top:260.00px;font-size:28px;color:#1c2b42;font-weight:700;letter-spacing:-0.464px;">Product Marketing: Weekly Sync 01-13-2025</div>
<svg style="position:absolute;left:469px;top:315.6px;" width="23.7" height="23.7" viewBox="0 0 24 24" fill="none"><defs><clipPath id="c469"><circle cx="12" cy="12" r="12"/></clipPath></defs><g clip-path="url(#c469)"><rect width="24" height="24" fill="#86b84a"/><rect x="9.8" y="12.5" width="4.6" height="6" fill="#e2b393"/><path d="M0.5 24 C1.5 19.5 5 17.6 9 17.2 L15.4 17.2 C19 17.6 22.5 19.5 23.5 24 Z" fill="#e08b2b"/><ellipse cx="12.2" cy="9.8" rx="4.2" ry="5.1" fill="#ecc3a6"/><path d="M7.9 9.6 C7.2 4.6 9.8 3.6 12.2 3.6 C15 3.6 17 5 16.5 9.6 C15.8 6.6 9.2 6.2 7.9 9.6 Z" fill="#8f7d70"/><circle cx="10.6" cy="9.6" r="0.65" fill="#8098ae"/><circle cx="13.9" cy="9.6" r="0.65" fill="#8098ae"/></g></svg>
<div class="t" style="left:500.6px;top:322.00px;font-size:12.6px;color:#505258;font-weight:400;letter-spacing:-0.198px;">By Veronica Rodriguez</div>
<svg style="position:absolute;left:643px;top:319.5px;" width="17" height="16" viewBox="0 0 17 16" fill="none"><path d="M8.4 2.2 C6.5 1.2 3.4 1 1.2 1.6 V13.6 C3.4 13 6.5 13.2 8.4 14.2 C10.3 13.2 13.4 13 15.6 13.6 V1.6 C13.4 1 10.3 1.2 8.4 2.2 Z M8.4 2.2 V15.4" stroke="#44546f" stroke-width="1.4" stroke-linejoin="round"/><path d="M10.8 4.8 H12.8 M10.8 7 H12.8" stroke="#44546f" stroke-width="1.2"/></svg>
<div class="t" style="left:668px;top:322.00px;font-size:12.4px;color:#505258;font-weight:400;letter-spacing:-0.330px;">2 min</div>
<svg style="position:absolute;left:716.5px;top:320px;" width="15" height="15" viewBox="0 0 15 15" fill="none"><path d="M1.2 0.8 V13.6 H14" stroke="#505258" stroke-width="1.4" stroke-linecap="round" stroke-linejoin="round"/><path d="M1.4 10.6 L5.4 6.6 L8 9 L13.2 3 M9.6 2.6 H13.4 V6.4" stroke="#505258" stroke-width="1.4" stroke-linecap="round" stroke-linejoin="round"/></svg>
<div class="t" style="left:740px;top:322.00px;font-size:12.4px;color:#505258;font-weight:400;letter-spacing:-0.429px;">1 view</div>
<div style="position:absolute;left:465px;top:367px;width:175.6px;height:203.5px;background:#f8f8f8"></div>
<div style="position:absolute;left:465px;top:367px;width:745.5px;height:203.5px;border:1px solid #dfe1e6;box-sizing:border-box"></div>
<div style="position:absolute;left:640px;top:367px;width:2px;height:203.5px;background:#e6e8eb"></div>
<div style="position:absolute;left:465px;top:404.8px;width:745.5px;height:1px;background:#dfe1e6"></div>
<div style="position:absolute;left:465px;top:443.6px;width:745.5px;height:1px;background:#dfe1e6"></div>
<div class="t" style="left:477.5px;top:379.00px;font-size:14.2px;color:#292a2e;font-weight:700;letter-spacing:-0.292px;">Event</div>
<div class="t" style="left:477.5px;top:419.00px;font-size:14.2px;color:#292a2e;font-weight:700;letter-spacing:0.141px;">Date</div>
<div class="t" style="left:477.5px;top:460.00px;font-size:14.2px;color:#292a2e;font-weight:700;letter-spacing:0.089px;">Invitees</div>
<div class="t" style="left:653.7px;top:379.00px;font-size:14.4px;color:#22375a;font-weight:400;letter-spacing:0.026px;">Product Marketing: Weekly Sync 01-13-2025</div>
<div style="position:absolute;left:653.2px;top:413.8px;width:90.8px;height:23.7px;background:#f0f1f3;border-radius:3px"></div>
<div class="t" style="left:657.6px;top:419.00px;font-size:14.2px;color:#292a2e;font-weight:400;letter-spacing:0.036px;">Jan 13, 2025</div>
<div style="position:absolute;left:653.3px;top:457.3px;width:124.3px;height:19.3px;background:#f0f1f3;border-radius:10px"></div>
<div class="t" style="left:657.8px;top:462.00px;font-size:12.6px;color:#292a2e;font-weight:400;">@</div>
<div class="t" style="left:672.7px;top:460.00px;font-size:14.2px;color:#292a2e;font-weight:400;letter-spacing:-0.022px;">Jenna Nangong</div>
<div style="position:absolute;left:653.3px;top:484.7px;width:134.9px;height:19.3px;background:#f0f1f3;border-radius:10px"></div>
<div class="t" style="left:657.8px;top:489.00px;font-size:12.6px;color:#292a2e;font-weight:400;">@</div>
<div class="t" style="left:672.7px;top:487.00px;font-size:14.2px;color:#292a2e;font-weight:400;letter-spacing:-0.141px;">Veronica Rahman</div>
<div style="position:absolute;left:653.3px;top:512.1px;width:108.5px;height:19.3px;background:#f0f1f3;border-radius:10px"></div>
<div class="t" style="left:657.8px;top:516.00px;font-size:12.6px;color:#292a2e;font-weight:400;">@</div>
<div class="t" style="left:672.7px;top:515.00px;font-size:14.2px;color:#292a2e;font-weight:400;letter-spacing:-0.193px;">Bailey Rankin</div>
<div style="position:absolute;left:653.3px;top:539.5px;width:104.9px;height:19.3px;background:#f0f1f3;border-radius:10px"></div>
<div class="t" style="left:657.8px;top:544.00px;font-size:12.6px;color:#292a2e;font-weight:400;">@</div>
<div class="t" style="left:672.7px;top:542.00px;font-size:14.2px;color:#292a2e;font-weight:400;letter-spacing:-0.079px;">Andrew Park</div>
<div class="t" style="left:465.4px;top:596.00px;font-size:12.1px;color:#626f86;font-weight:700;letter-spacing:0.082px;">Synced from Google Calendar |</div>
<div class="t" style="left:651px;top:596.00px;font-size:12.1px;color:#2c64d8;font-weight:700;letter-spacing:0.022px;">Adjust your settings on Loom</div>
<div style="position:absolute;left:465px;top:649.3px;width:745.5px;height:1px;background:#e1e3e7"></div>
<div class="t" style="left:465.4px;top:685.00px;font-size:23px;color:#1c2b42;font-weight:700;letter-spacing:-0.038px;">Summary</div>
<div style="position:absolute;left:578.9px;top:690.3px;width:88.8px;height:15.6px;background:#f3f0ff;border-radius:3px"></div>
<div class="t" style="left:583.5px;top:693.00px;font-size:10.8px;color:#5e4db2;font-weight:700;letter-spacing:-0.073px;">AI GENERATED</div>
<div class="t" style="left:465.4px;top:722.00px;font-size:16px;color:#292a2e;font-weight:700;letter-spacing:0.091px;">Timeline and Focus</div>
<div class="t" style="left:625.3px;top:723.00px;font-size:14.8px;color:#2c64d8;font-weight:400;letter-spacing:0.066px;">4:05</div>
<div class="t" style="left:465.4px;top:744.00px;font-size:16.4px;color:#292a2e;font-weight:400;letter-spacing:0.084px;">The GA release is targeted for January 31, 2024. Focus will be on refining and polishing</div>
<div style="position:absolute;left:1349px;top:493.8px;width:50px;height:218px;background:#fff;border:1px solid #e8e9ec;border-radius:25px;box-sizing:border-box;box-shadow:0 1px 1px rgba(9,30,66,0.16)"></div>
<div style="position:absolute;left:1349px;top:717.5px;width:50px;height:48px;background:#fff;border:1px solid #e8e9ec;border-radius:25px;box-sizing:border-box;box-shadow:0 1px 1px rgba(9,30,66,0.16)"></div>
<div style="position:absolute;left:1361px;top:583px;width:26px;height:1px;background:#e4e6ea"></div>
<svg style="position:absolute;left:1365px;top:509.5px;" width="16" height="16" viewBox="0 0 16 16" fill="none"><path d="M2.6 1.4 H13.4 A1.3 1.3 0 0 1 14.7 2.7 V10.3 A1.3 1.3 0 0 1 13.4 11.6 H6 L2.4 14.6 V11.6 H2.6 A1.3 1.3 0 0 1 1.3 10.3 V2.7 A1.3 1.3 0 0 1 2.6 1.4 Z" stroke="#505258" stroke-width="1.4" stroke-linecap="round" stroke-linejoin="round"/><path d="M4.5 4.8 H11.5 M4.5 7.8 H9" stroke="#505258" stroke-width="1.4" stroke-linecap="round" stroke-linejoin="round"/></svg>
<svg style="position:absolute;left:1365px;top:548.5px;" width="16" height="16" viewBox="0 0 16 16" fill="none"><path d="M1.5 2.5 H14.5 M1.5 7.5 H14.5 M1.5 12.5 H8" stroke="#505258" stroke-width="1.4" stroke-linecap="round" stroke-linejoin="round"/></svg>
<svg style="position:absolute;left:1364.5px;top:600px;" width="18" height="18" viewBox="0 0 18 18" fill="none"><path d="M12.8 6.4 A6.6 6.6 0 1 1 9.4 2.4" stroke="#505258" stroke-width="1.4" stroke-linecap="round" stroke-linejoin="round"/><circle cx="5.8" cy="8" r="1" fill="#505258"/><circle cx="10" cy="8" r="1" fill="#505258"/><path d="M5 11 A3.4 3.4 0 0 0 10.6 11" stroke="#505258" stroke-width="1.4" stroke-linecap="round" stroke-linejoin="round"/><path d="M13.6 0.8 V5.4 M11.3 3.1 H15.9" stroke="#505258" stroke-width="1.4" stroke-linecap="round" stroke-linejoin="round"/></svg>
<svg style="position:absolute;left:1364.5px;top:640px;" width="18" height="16" viewBox="0 0 18 16" fill="none"><rect x="1" y="2" width="11" height="11.6" rx="1.6" stroke="#505258" stroke-width="1.4" stroke-linecap="round" stroke-linejoin="round"/><path d="M12 6.3 L16.4 3.6 V12 L12 9.3" stroke="#505258" stroke-width="1.4" stroke-linecap="round" stroke-linejoin="round"/></svg>
<svg style="position:absolute;left:1365px;top:678px;" width="16" height="16" viewBox="0 0 16 16" fill="none"><rect x="1.4" y="1.4" width="4.8" height="4.8" rx="1.4" stroke="#505258" stroke-width="1.4" stroke-linecap="round" stroke-linejoin="round"/><rect x="9.2" y="1.4" width="4.8" height="4.8" rx="1.4" stroke="#505258" stroke-width="1.4" stroke-linecap="round" stroke-linejoin="round"/><rect x="1.4" y="9.2" width="4.8" height="4.8" rx="1.4" stroke="#505258" stroke-width="1.4" stroke-linecap="round" stroke-linejoin="round"/><path d="M11.6 8.6 V14.6 M8.6 11.6 H14.6" stroke="#505258" stroke-width="1.4" stroke-linecap="round" stroke-linejoin="round"/></svg>
<svg style="position:absolute;left:1365px;top:733.5px;" width="16" height="16" viewBox="0 0 16 16" fill="none"><path d="M8 1 V4 M8 12 V15 M1 8 H4 M12 8 H15 M3 3 L5.1 5.1 M10.9 10.9 L13 13 M13 3 L10.9 5.1 M5.1 10.9 L3 13" stroke="#505258" stroke-width="1.4" stroke-linecap="round"/></svg>
</body></html>
